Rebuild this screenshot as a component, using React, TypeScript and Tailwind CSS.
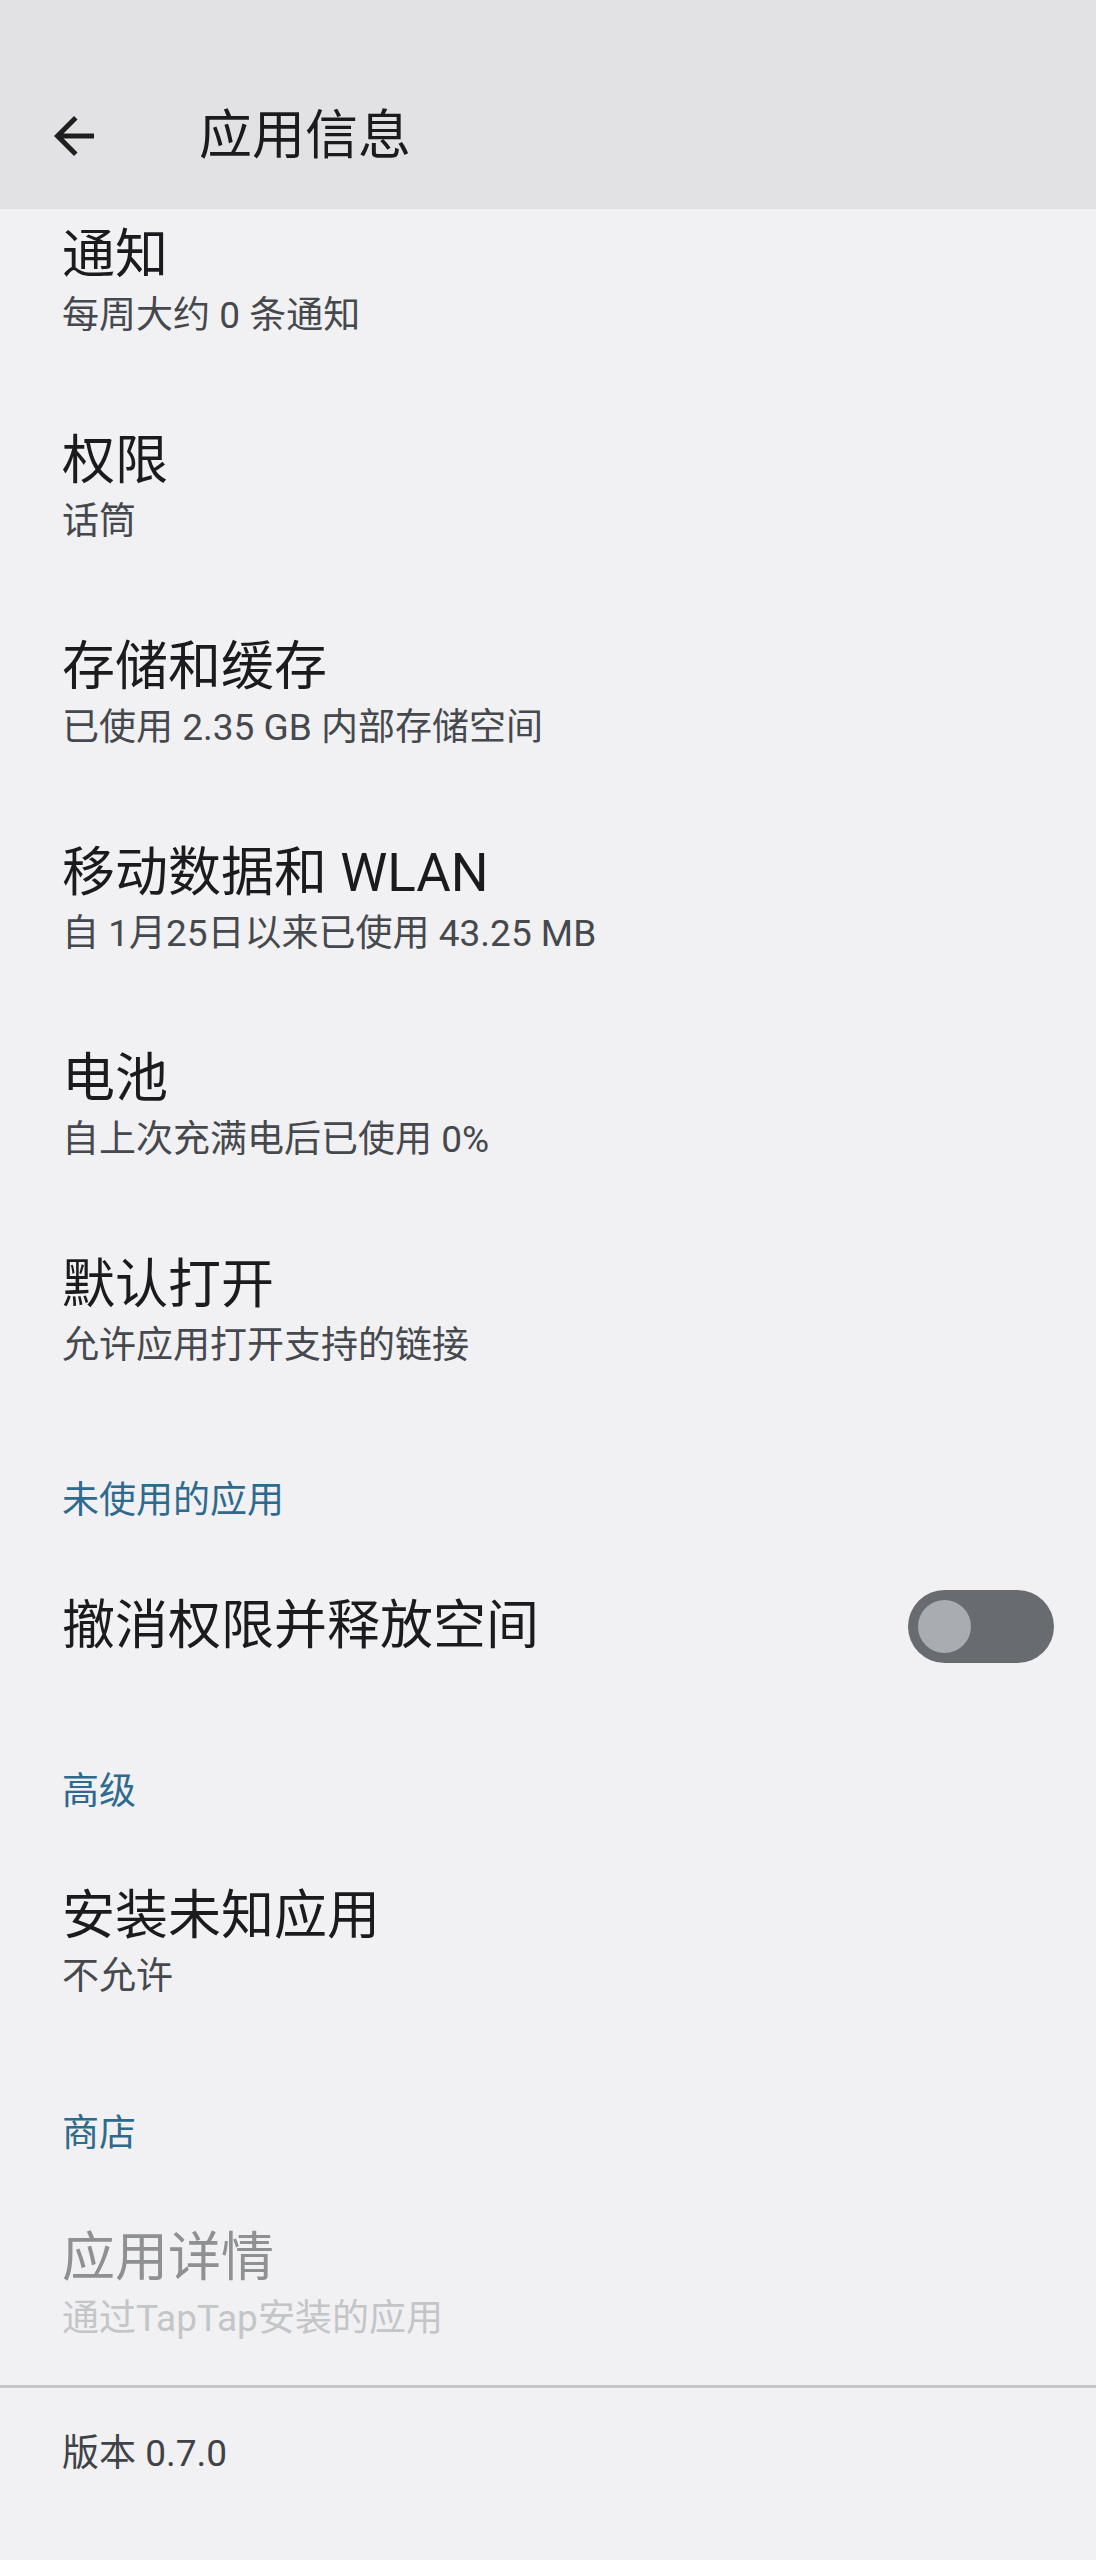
import * as React from "react";

const font = { fontFamily: 'Roboto, "Noto Sans CJK SC", sans-serif' };

interface ItemProps {
  title: string;
  summary?: string;
  disabled?: boolean;
  className?: string;
}

function PrefItem({ title, summary, disabled, className = "" }: ItemProps) {
  return (
    <div className={`pl-[62px] pr-[42px] ${className}`}>
      <div
        className={`text-[53px] leading-[64px] ${
          disabled ? "text-[#8f9093]" : "text-[#1b1b1f]"
        }`}
      >
        {title}
      </div>
      {summary && (
        <div
          className={`text-[37px] leading-[58px] ${
            disabled ? "text-[#c4c5c7]" : "text-[#45484d]"
          }`}
        >
          {summary}
        </div>
      )}
    </div>
  );
}

function SectionHeader({ label, className = "" }: { label: string; className?: string }) {
  return (
    <div className={`pl-[62px] text-[37px] leading-[50px] text-[#2d6a8e] ${className}`}>
      {label}
    </div>
  );
}

function Toggle() {
  return (
    <div className="w-[146px] h-[73px] rounded-full bg-[#686c70] flex items-center pl-[10px]">
      <div className="w-[53px] h-[53px] rounded-full bg-[#a9adb1]" />
    </div>
  );
}

export default function App() {
  return (
    <div className="w-[1096px] min-h-[2560px] bg-[#f1f1f3]" style={font}>
      {/* 顶栏 */}
      <div className="h-[209px] bg-[#e2e2e5] pt-[63px]">
        <div className="h-[146px] flex items-center pl-[44px]">
          <svg viewBox="0 0 24 24" className="w-[60px] h-[60px]" fill="#1f1f1f">
            <path d="M20 11H7.83l5.59-5.59L12 4l-8 8 8 8 1.41-1.41L7.83 13H20v-2z" />
          </svg>
          <div className="ml-[95px] text-[53px] leading-[64px] text-[#1b1b1f]">应用信息</div>
        </div>
      </div>

      {/* 列表 */}
      <PrefItem className="pt-[14px] pb-[42px]" title="通知" summary="每周大约 0 条通知" />
      <PrefItem className="py-[42px]" title="权限" summary="话筒" />
      <PrefItem className="py-[42px]" title="存储和缓存" summary="已使用 2.35 GB 内部存储空间" />
      <PrefItem className="py-[42px]" title="移动数据和 WLAN" summary="自 1月25日以来已使用 43.25 MB" />
      <PrefItem className="py-[42px]" title="电池" summary="自上次充满电后已使用 0%" />
      <PrefItem className="py-[42px]" title="默认打开" summary="允许应用打开支持的链接" />

      <SectionHeader className="pt-[59px]" label="未使用的应用" />
      <div className="h-[200px] flex items-center justify-between pl-[62px] pr-[42px]">
        <div className="text-[53px] leading-[64px] text-[#1b1b1f]">撤消权限并释放空间</div>
        <Toggle />
      </div>

      <SectionHeader className="pt-[41px]" label="高级" />
      <PrefItem className="pt-[67px] pb-[42px]" title="安装未知应用" summary="不允许" />

      <SectionHeader className="pt-[61px]" label="商店" />
      <PrefItem className="pt-[67px] pb-[37px]" title="应用详情" summary="通过TapTap安装的应用" disabled />

      <div className="border-t-[3px] border-[#c6c6c8]" />
      <div className="pt-[41px] pl-[62px] text-[37px] leading-[50px] text-[#3f4247]">版本 0.7.0</div>
    </div>
  );
}
